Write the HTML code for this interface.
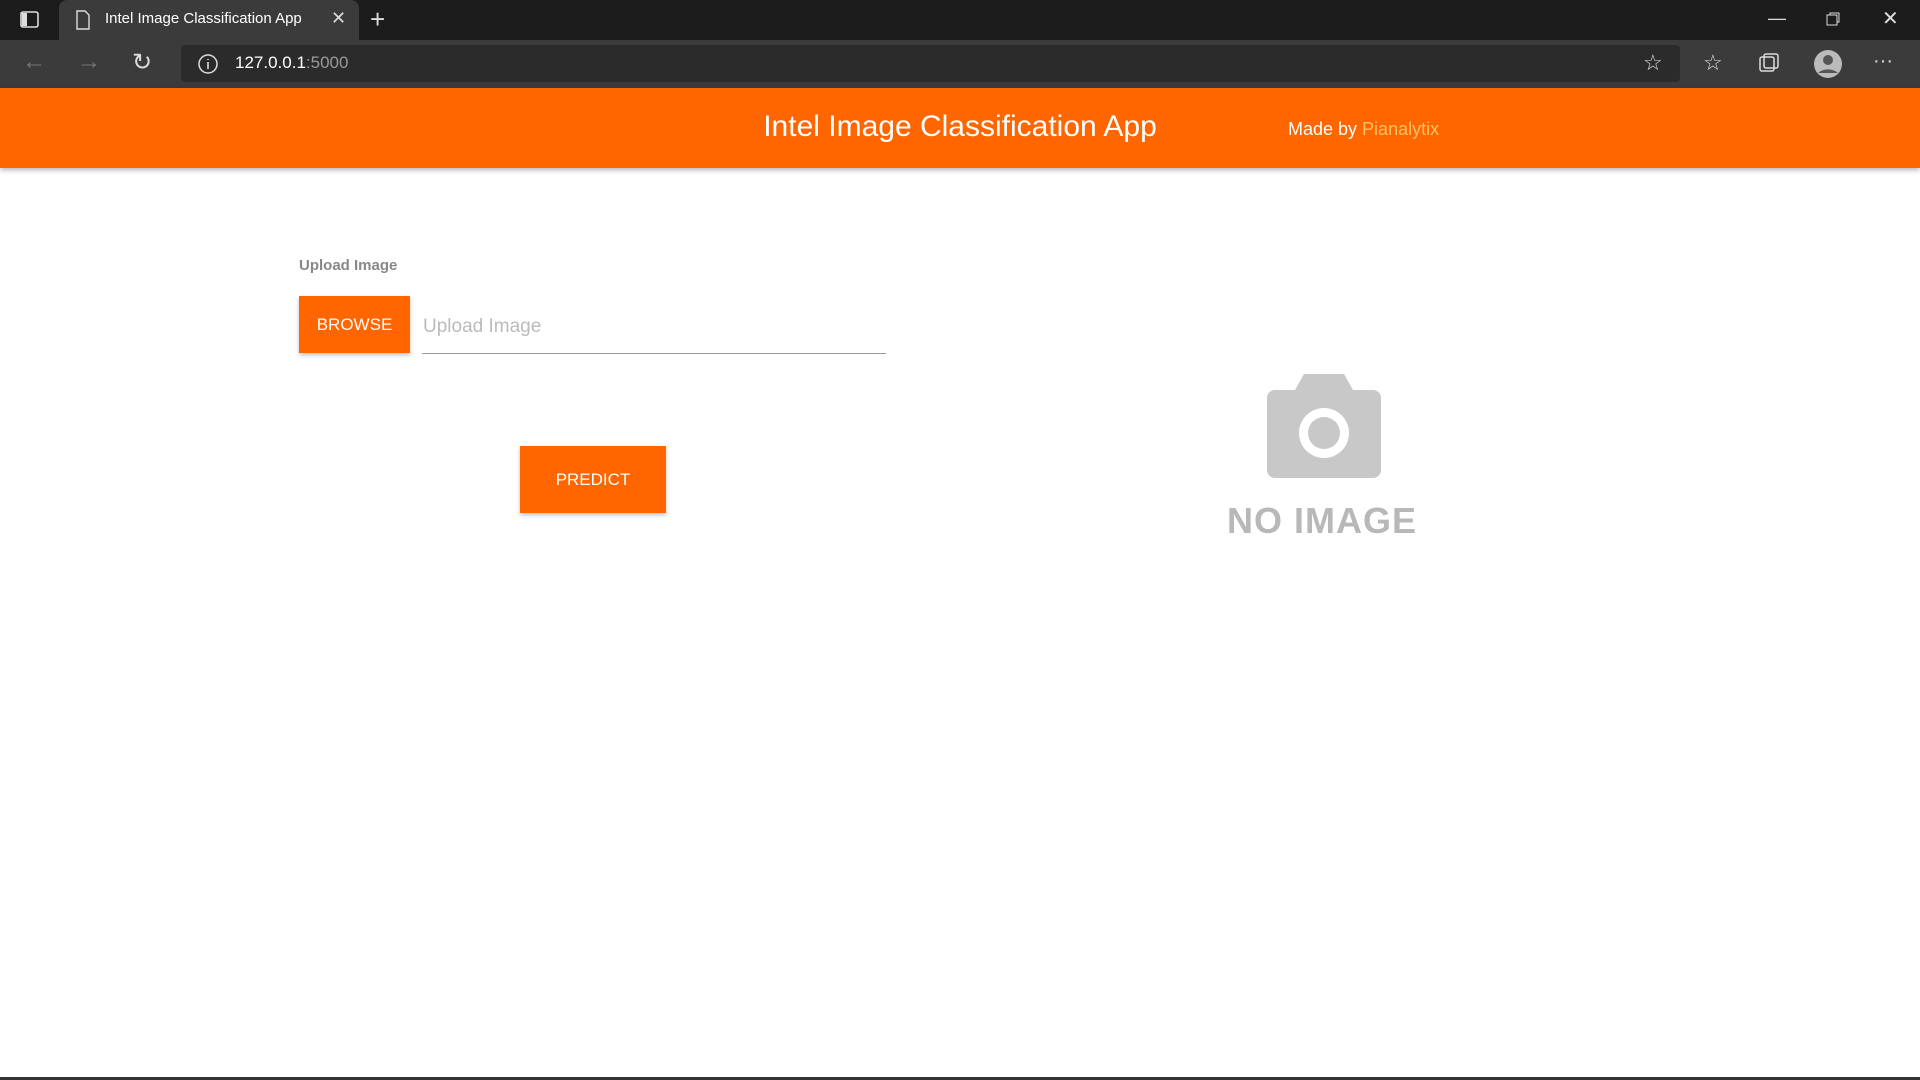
<!DOCTYPE html>
<html><head><meta charset="utf-8"><style>
*{margin:0;padding:0;box-sizing:border-box}
body{width:1920px;height:1080px;background:#fff;font-family:"Liberation Sans",sans-serif;position:relative;overflow:hidden}
.abs{position:absolute}
.tabbar{left:0;top:0;width:1920px;height:40px;background:#1c1c1c}
.tab{left:59px;top:0;width:300px;height:40px;background:#3b3b3b;border-radius:8px 8px 0 0;color:#fff;font-size:15px}
.nav{left:0;top:40px;width:1920px;height:48px;background:#3b3b3b}
.url{left:181px;top:45px;width:1499px;height:37px;background:#2b2b2b;border-radius:4px;color:#fff;font-size:17px}
.hdr{left:0;top:88px;width:1920px;height:80px;background:#ff6600;box-shadow:0 2px 5px rgba(0,0,0,.3)}
.btn{background:#ff6600;color:#fff;font-size:17px;text-align:center;box-shadow:0 2px 4px rgba(0,0,0,.25)}
</style></head><body>
<div class="abs tabbar"></div>
<svg class="abs" style="left:20px;top:11px" width="20" height="18"><rect x="1" y="1" width="17" height="15" rx="2" fill="none" stroke="#ddd" stroke-width="1.6"/><rect x="2" y="2" width="5" height="13" fill="#ddd"/></svg>
<div class="abs tab"><svg class="abs" style="left:16px;top:10px" width="16" height="20"><path d="M2 1h8l4 4v14H2z" fill="none" stroke="#ddd" stroke-width="1.4"/></svg><span class="abs" style="left:46px;top:10px">Intel Image Classification App</span><span class="abs" style="left:272px;top:8px;font-size:18px;color:#ddd">✕</span></div>
<div class="abs" style="left:370px;top:4px;color:#ddd;font-size:26px;font-weight:300">+</div>
<div class="abs" style="left:1768px;top:8px;color:#ddd;font-size:18px">—</div>
<svg class="abs" style="left:1826px;top:12px" width="14" height="14"><rect x="1" y="3" width="10" height="10" fill="none" stroke="#ddd"/><path d="M4 3V1h9v9h-2" fill="none" stroke="#ddd"/></svg>
<div class="abs" style="left:1882px;top:6px;color:#ddd;font-size:20px">✕</div>
<div class="abs nav"></div>
<div class="abs" style="left:22px;top:48px;color:#777;font-size:24px">←</div>
<div class="abs" style="left:77px;top:48px;color:#777;font-size:24px">→</div>
<div class="abs" style="left:132px;top:48px;color:#ddd;font-size:24px">↻</div>
<div class="abs url"><svg class="abs" style="left:16px;top:8px" width="22" height="22"><circle cx="11" cy="11" r="9" fill="none" stroke="#ddd" stroke-width="1.5"/><path d="M11 9v7M11 6v1" stroke="#ddd" stroke-width="1.6"/></svg><span class="abs" style="left:54px;top:8px">127.0.0.1<span style="color:#999">:5000</span></span></div>
<div class="abs" style="left:1643px;top:50px;color:#ddd;font-size:22px">☆</div>
<div class="abs" style="left:1703px;top:50px;color:#ddd;font-size:22px">☆</div>
<svg class="abs" style="left:1758px;top:52px" width="22" height="22"><rect x="2" y="5" width="14" height="14" rx="2" fill="none" stroke="#ddd" stroke-width="1.5"/><rect x="6" y="2" width="14" height="14" rx="2" fill="none" stroke="#ddd" stroke-width="1.5"/></svg>
<svg class="abs" style="left:1813px;top:49px" width="30" height="30"><circle cx="15" cy="15" r="14" fill="#bbb"/><circle cx="15" cy="11" r="5" fill="#555"/><path d="M5 24a12 8 0 0 1 20 0" fill="#555"/></svg>
<div class="abs" style="left:1873px;top:50px;color:#ddd;font-size:20px">···</div>
<div class="abs hdr"></div>
<div class="abs" style="left:660px;top:110px;width:600px;text-align:center;color:#fff;font-size:30px">Intel Image Classification App</div>
<div class="abs" style="left:1288px;top:119px;color:#fff;font-size:18px">Made by <span style="color:#ffc266">Pianalytix</span></div>
<div class="abs" style="left:299px;top:257px;color:#888;font-size:15px;font-weight:bold">Upload Image</div>
<div class="abs btn" style="left:299px;top:296px;width:111px;height:57px;line-height:57px">BROWSE</div>
<div class="abs" style="left:423px;top:316px;color:#bbb;font-size:19px">Upload Image</div>
<div class="abs" style="left:422px;top:353px;width:464px;height:1px;background:#999"></div>
<div class="abs btn" style="left:520px;top:446px;width:146px;height:67px;line-height:67px">PREDICT</div>
<svg class="abs" style="left:1265px;top:373px" width="118" height="106"><path d="M10 17h20l9-16h40l9 16h20a8 8 0 0 1 8 8v72a8 8 0 0 1-8 8H10a8 8 0 0 1-8-8V25a8 8 0 0 1 8-8z" fill="#c8c8c8"/><circle cx="59" cy="60" r="25" fill="#fff"/><circle cx="59" cy="60" r="16" fill="#c8c8c8"/></svg>
<div class="abs" style="left:1172px;top:500px;width:300px;text-align:center;color:#b8b8b8;font-size:36px;font-weight:bold;letter-spacing:1px;white-space:nowrap">NO IMAGE</div>
<div class="abs" style="left:0;top:1077px;width:1920px;height:3px;background:#333"></div>
</body></html>
